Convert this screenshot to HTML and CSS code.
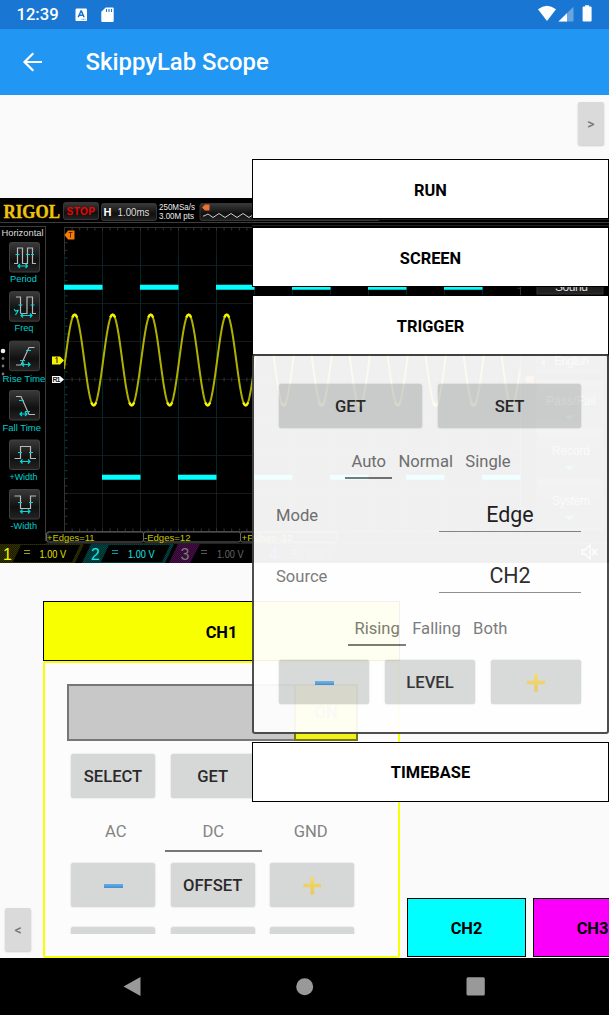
FILE: index.html
```html
<!DOCTYPE html>
<html lang="en">
<head>
<meta charset="utf-8">
<title>SkippyLab Scope</title>
<link rel="stylesheet" href="styles.css">
</head>
<body>
<div class="phone">
  <header class="status">
    <span class="clock">12:39</span>
    <svg class="status-left" width="40" height="16" viewBox="0 0 40 16">
      <rect x="0.500" y="1.500" width="11.500" height="12.600" rx="1.200" fill="#fff"/>
      <path d="M3.200 10.200 6 4h.4l2.700 6.200M4.300 8.200h3.600" fill="none" stroke="#1976d2" stroke-width="1.500"/>
      <path d="M6.500 12.300h4" stroke="#1976d2" stroke-width=".8" stroke-dasharray="1 .6"/>
      <path d="M30.700.4H37.600Q38.700.4 38.700 1.500V14Q38.700 15.100 37.600 15.100H27.400Q26.300 15.100 26.300 14V4.800Z" fill="#fff"/>
      <path d="M31.500 2v3M34 2v3M36.500 2v3" stroke="#1976d2" stroke-width="1.100"/>
    </svg>
    <svg class="status-right" width="56" height="18" viewBox="0 0 56 18">
      <path d="M0 4.300Q9-3 18 4.300L9 16Z" fill="#fff"/>
      <path d="M20.500 16.500 35.500 1.800V16.500Z" fill="#fff" opacity=".35"/>
      <path d="M20.500 16.500 29 8.200V16.500Z" fill="#fff"/>
      <path d="M45.600 1.500h1.500V.2h4v1.300h1.500q1 0 1 1v13q0 1-1 1h-7q-1 0-1-1v-13q0-1 1-1Z" fill="#fff"/>
    </svg>
  </header>
  <div class="appbar">
    <svg width="20" height="20" viewBox="0 0 20 20"><path d="M20 10H2.500M11.300 1.200 2.500 10l8.800 8.800" fill="none" stroke="#fff" stroke-width="2.200"/></svg>
    <h1 class="title">SkippyLab Scope</h1>
  </div>

  <main class="stage">
    <svg class="scope" id="scope" width="609" height="365" viewBox="0 198 609 365">
      <defs>
        <linearGradient id="key" x1="0" y1="0" x2="0" y2="1"><stop offset="0" stop-color="#3a3a3a"/><stop offset=".6" stop-color="#101010"/><stop offset="1" stop-color="#242424"/></linearGradient>
        <pattern id="hy" width="2" height="2" patternUnits="userSpaceOnUse"><rect width="2" height="2" fill="#1c1c00"/><path d="M0 0 2 2" stroke="#3c3c00" stroke-width=".7"/></pattern>
        <pattern id="hc" width="2" height="2" patternUnits="userSpaceOnUse"><rect width="2" height="2" fill="#002c2c"/><path d="M0 0 2 2" stroke="#005050" stroke-width=".7"/></pattern>
        <pattern id="hp" width="2" height="2" patternUnits="userSpaceOnUse"><rect width="2" height="2" fill="#2c062c"/><path d="M0 0 2 2" stroke="#551455" stroke-width=".7"/></pattern>
        <clipPath id="plot"><rect x="64" y="227" width="458" height="306"/></clipPath>
      </defs>
      <rect x="0" y="198" width="609" height="365" fill="#000"/>
      <text class="brand" x="3.500" y="217.700" textLength="56.500" lengthAdjust="spacingAndGlyphs">RIGOL</text>
      <g fill="url(#key)" stroke="#353535">
        <rect x="63.500" y="202.500" width="35" height="17" rx="2"/>
        <rect x="101.500" y="203.500" width="55" height="17" rx="2"/>
        <rect x="200" y="203.500" width="180" height="17" rx="2"/>
      </g>
      <text class="stop" x="66.500" y="215" textLength="28.500">STOP</text>
      <text class="hlabel" x="103.500" y="216">H</text>
      <text class="small" x="117.500" y="216.400" textLength="32" lengthAdjust="spacingAndGlyphs">1.00ms</text>
      <text class="tiny" x="159" y="210.300" textLength="36" lengthAdjust="spacingAndGlyphs">250MSa/s</text>
      <text class="tiny" x="159" y="218.700" textLength="35" lengthAdjust="spacingAndGlyphs">3.00M pts</text>
      <path d="M202 207.500 205 204.500h4.500v6H205Z" fill="#f07030"/>
      <path d="M203 216h1l4-2 5 3.500 6-4 6 4 6-4 6 4 6-4 6 4 6-4" fill="none" stroke="#ccc"/>
      <path d="M0 222.500H609M46 226.500H0M45.500 226.500V541M48 541V533.500q0-2 2-2" stroke="#3c3c3c" fill="none"/>
      <path d="M252 219.500H609M252 225.500H609" stroke="#222" fill="none"/>
      <text class="menu-title" x="1.500" y="236" textLength="42" lengthAdjust="spacingAndGlyphs">Horizontal</text>
      <g id="keys" fill="url(#key)" stroke="#404040">
        <rect x="9.500" y="242.500" width="30" height="29.500" rx="2"/><rect x="9.500" y="291.700" width="30" height="29.500" rx="2"/>
        <rect x="9.500" y="341.200" width="30" height="29.500" rx="2"/><rect x="9.500" y="390.500" width="30" height="29.500" rx="2"/>
        <rect x="9.500" y="440" width="30" height="29.500" rx="2"/><rect x="9.500" y="489.500" width="30" height="29.500" rx="2"/>
      </g>
      <g fill="none" stroke="#b8b8b8" stroke-width="1.200">
        <path d="M14 263.500H17.500V248H22.500V263.500H27.500V248H32.500V263.500H36"/>
        <path d="M16 297H20.500V313.500M20.500 313.500H27V297H32.500V313.500H36"/>
        <path d="M16 365H21L29 347.500H34.500"/>
        <path d="M16 396.500H21L29 414.500H35"/>
        <path d="M14.500 458.500H20.500V446.500H30.500V458.500H36"/>
        <path d="M14.500 496H20.500V508.500H30.500V496H36"/>
      </g>
      <g fill="none" stroke="#00d8d8" stroke-width="1.200">
        <path d="M15.500 254.500h4M26 254.500h4M31 254.500h3M18 266H27.500M20 264l-2 2 2 2M25.500 264l2 2-2 2"/>
        <path d="M18.500 305h4M30.500 305h4M20.500 315.500H32M23 313.500l-2 2 2 2M30 313.500l2 2-2 2M14 309l1.500 2 3-1M15.500 315l3-5"/>
        <path d="M26 350.500h5M20 360.500h5M21 364.500H30M24 362.500l-2 2 2 2M28 362.500l2 2-2 2"/>
        <path d="M19 400.500h5M25 411.500h5M20 414H27M22 412l-2 2 2 2M25 412l2 2-2 2"/>
        <path d="M18 452.500h4M29 452.500h4M20.500 461.500H30M22.500 459.500l-2 2 2 2M28 459.500l2 2-2 2"/>
        <path d="M18 502.500h4M29 502.500h4M20.500 511.500H30M22.500 509.500l-2 2 2 2M28 509.500l2 2-2 2"/>
      </g>
      <g class="keytext">
        <text x="10" y="281.500" textLength="27" lengthAdjust="spacingAndGlyphs">Period</text><text x="14.500" y="331" textLength="19" lengthAdjust="spacingAndGlyphs">Freq</text>
        <text x="2.500" y="381.500" textLength="43" lengthAdjust="spacingAndGlyphs">Rise Time</text><text x="2.500" y="431" textLength="38.500" lengthAdjust="spacingAndGlyphs">Fall Time</text>
        <text x="9.500" y="479.500" textLength="28" lengthAdjust="spacingAndGlyphs">+Width</text><text x="10.500" y="528.500" textLength="26.500" lengthAdjust="spacingAndGlyphs">-Width</text>
      </g>
      <g fill="#777"><circle cx="3" cy="351" r="2.300" fill="#eee"/><circle cx="3" cy="358.500" r="1.400"/><circle cx="3" cy="366" r="1.400"/><circle cx="3" cy="374" r="1.400"/></g>
      <g id="grid" fill="none" stroke="#333"></g>
      <g id="waves" fill="none" clip-path="url(#plot)"></g>
      <path d="M64.500 235 68 230.500h6.500v9H68Z" fill="#f57c00"/><path d="M68.500 232.500h4M70.500 232.500v5" stroke="#622" />
      <path d="M52 356.500h8l4 4-4 4h-8Z" fill="#f4f400"/><path d="M55.500 358.500 57 357.500v5.500" stroke="#222" fill="none"/>
      <path d="M52 376h8l4 3.500-4 3.500h-8Z" fill="#fff"/><text class="ref" x="52.500" y="382.300" textLength="8">R1</text>
      <path d="M524 379.500l3-3.500h7v7h-7Z" fill="#c86a20"/>
      <g fill="none" stroke="#666">
        <rect x="46.500" y="532" width="97" height="10" rx="2"/><rect x="143.500" y="532" width="97" height="10" rx="2"/><rect x="240.500" y="532" width="97" height="10" rx="2"/>
      </g>
      <path d="M46 543.500H609" stroke="#222"/>
      <g class="measure"><text x="47" y="541" textLength="47.500" lengthAdjust="spacingAndGlyphs">+Edges=11</text><text x="144" y="541" textLength="46.500" lengthAdjust="spacingAndGlyphs">-Edges=12</text><text x="241.500" y="541" textLength="51" lengthAdjust="spacingAndGlyphs">+Pulses=12</text></g>
      <path d="M0 544H84L75 563H0Z" fill="url(#hy)"/><path d="M21 545H80L72 562H13Z" fill="#000"/>
      <path d="M91 544H174L165 563H82Z" fill="url(#hc)"/><path d="M109 545H170L162 562H101Z" fill="#000"/>
      <path d="M178 544H200L190 563H169Z" fill="url(#hp)"/>
      <g class="chan">
        <text x="3" y="559.500" fill="#f4f400">1</text><text x="91" y="559.500" fill="#19e6e6">2</text>
        <text x="180.500" y="559.500" fill="#777">3</text><text x="269" y="559.500" fill="#4060e0">4</text>
      </g>
      <path d="M24 550.500h6M24 553.500h6" stroke="#a0a000"/><path d="M112 550.500h6M112 553.500h6" stroke="#00a0a0"/><path d="M201 550.500h6M201 553.500h6M291 550.500h6M291 553.500h6" stroke="#555"/>
      <g class="volts"><text x="39.500" y="557.500" textLength="26.500" lengthAdjust="spacingAndGlyphs" fill="#e0e000">1.00 V</text><text x="128" y="557.500" textLength="26.500" lengthAdjust="spacingAndGlyphs" fill="#19e6e6">1.00 V</text><text x="217" y="557.500" textLength="26.500" lengthAdjust="spacingAndGlyphs" fill="#666">1.00 V</text><text x="306" y="557.500" textLength="26.500" lengthAdjust="spacingAndGlyphs" fill="#555">10.0 V</text></g>
      <g fill="url(#key)" stroke="#333"><rect x="537" y="245" width="66" height="49"/><rect x="537" y="330" width="66" height="43"/><rect x="537" y="380.500" width="66" height="49"/><rect x="537" y="430.500" width="66" height="49"/><rect x="537" y="480.500" width="66" height="49"/></g>
      <g class="side"><text x="555" y="291" textLength="33">Sound</text><g opacity=".8"><text x="554" y="364.500" textLength="35">English</text><text x="546" y="405" textLength="50">Pass/Fail</text><text x="552" y="455" textLength="38">Record</text><text x="552" y="505" textLength="38">System</text></g></g>
      <path d="M541 362.500l4-4v8ZM565 415.500h9l-4.500 4.500ZM565 466h9l-4.500 4.500ZM565 516h9l-4.500 4.500Z" fill="#00a8c8"/>
      <path d="M582 550h3l5-5v14l-5-5h-3ZM592 549l5 6M597 549l-5 6" fill="none" stroke="#fff" stroke-width="1.300"/>
    </svg>

    <section class="channels">
      <button class="side-tab tab-left">&lt;</button>
      <div class="channel ch1">
        <button class="head yellow">CH1</button>
        <div class="channel-body">
          <div class="toggle"><span class="toggle-on">ON</span></div>
          <div class="viewport">
            <div class="grid3">
              <button class="btn">SELECT</button><button class="btn">GET</button><button class="btn"></button>
            </div>
            <div class="tabs3"><span>AC</span><span class="picked">DC</span><span>GND</span></div>
            <div class="grid3">
              <button class="btn"><i class="minus"></i></button><button class="btn">OFFSET</button><button class="btn"><i class="plus"></i></button>
            </div>
            <div class="grid3 cut"><button class="btn"></button><button class="btn"></button><button class="btn"></button></div>
          </div>
        </div>
      </div>
      <button class="head small-head cyan">CH2</button>
      <button class="head small-head magenta">CH3</button>
    </section>

    <button class="side-tab tab-right">&gt;</button>

    <aside class="controls">
      <button class="head white">RUN</button>
      <button class="head white">SCREEN</button>
      <div class="group">
        <button class="head white">TRIGGER</button>
        <div class="trigger">
          <div class="pair"><button class="btn">GET</button><button class="btn">SET</button></div>
          <div class="choices mode-choices"><span class="picked">Auto</span><span>Normal</span><span>Single</span></div>
          <div class="field"><label>Mode</label><span class="value">Edge</span></div>
          <div class="field second"><label>Source</label><span class="value">CH2</span></div>
          <div class="choices slope-choices"><span class="picked">Rising</span><span>Falling</span><span>Both</span></div>
          <div class="triple"><button class="btn"><i class="minus"></i></button><button class="btn">LEVEL</button><button class="btn"><i class="plus"></i></button></div>
        </div>
      </div>
      <button class="head white">TIMEBASE</button>
    </aside>
  </main>

  <nav class="navbar">
    <svg width="609" height="57" viewBox="0 958 609 57" fill="#999"><path d="M123.500 986.500 140.500 977V996Z"/><circle cx="304.700" cy="986.700" r="8.500"/><rect x="466.500" y="977.300" width="18.300" height="18.300" rx="1.500"/></svg>
  </nav>
</div>
<script src="scope.js"></script>
</body>
</html>
```
FILE: styles.css
```css
* { box-sizing: border-box; }
body { margin: 0; background: #fafafa; font-family: Roboto, "Noto Sans", sans-serif; font-size: 16.6px; }
button { appearance: none; border: 0; margin: 0; padding: 0; font: inherit; color: inherit; background: none; }
.phone { width: 609px; height: 1015px; display: flex; flex-direction: column; overflow: hidden; }

.status { height: 28.5px; flex: none; background: #1976d2; color: #fff; display: flex; align-items: flex-start; padding: 0 15px 0 16.5px; }
.clock { font-weight: 500; font-size: 16.6px; line-height: 30px; width: 58.5px; }
.status-left { margin: 7px auto 0 0; }
.status-right { margin-top: 5px; }
.appbar { height: 66.5px; flex: none; background: #2196f3; color: #fff; display: flex; align-items: center; padding-left: 22px; gap: 43.5px; }
.title { margin: 1px 0 0; font-size: 23.9px; font-weight: 500; }

.stage { position: relative; height: 863px; flex: none; overflow: hidden; background: #fafafa; display: flex; flex-direction: column; }
.scope { display: block; flex: none; margin-top: 103px; }
.scope text { font-family: "Liberation Sans", Arial, sans-serif; }
.scope .brand { font-family: "Liberation Serif", serif; font-weight: 700; font-size: 18.5px; fill: #efc40c; stroke: #efc40c; stroke-width: .4px; }
.scope .stop { font-weight: 700; font-size: 10px; fill: #f00000; }
.scope .hlabel { font-weight: 700; font-size: 11px; fill: #fff; }
.scope .small { font-size: 10.3px; fill: #ddd; }
.scope .tiny { font-size: 9px; fill: #eee; }
.scope .menu-title { font-size: 9.8px; fill: #ddd; }
.keytext { font-size: 9.9px; fill: #00cfcf; }
.scope .ref { font-size: 7px; font-weight: 700; fill: #222; }
.measure { font-size: 9.8px; fill: #c8c800; }
.chan { font-size: 16px; }
.volts { font-size: 10px; }
.side { font-size: 12px; fill: #ddd; }

.channels { flex: none; height: 357px; margin-top: 38px; display: flex; align-items: flex-end; overflow: hidden; padding-bottom: 1px; }
.side-tab { width: 26px; height: 43px; flex: none; border-radius: 2px; background: #dadada; color: #777; font-size: 14px; font-weight: 500; box-shadow: 0 1px 2px #0003; }
.tab-left { margin: 0 12px 6px 5px; }
.tab-right { position: absolute; right: 5px; top: 7px; }
.head { display: block; border: 1.500px solid #000; font-weight: 700; font-size: 16.4px; color: #000; height: 60px; text-align: center; padding-top: 2px; }
.channel { width: 357px; height: 357px; margin-bottom: -1px; flex: none; display: flex; flex-direction: column; }
.yellow { width: 100%; flex: none; background: #f8ff00; }
.cyan { background: #00ffff; }
.magenta { background: #fa00fa; }
.small-head { flex: none; width: 119px; height: 59px; margin-left: 7px; }
.channel-body { flex: 1; background: #fcfcfc; border: 2px solid #f8ff00; border-radius: 2px; padding: 21px 40px 22px 22px; display: flex; flex-direction: column; }
.toggle { height: 57px; flex: none; border: 2px solid #777; background: #c8c8c8; display: flex; justify-content: flex-end; }
.toggle-on { width: 64px; margin: -2px; border: 2px solid #77770f; background: #f2f21b; color: #8c8cc0; display: flex; align-items: center; justify-content: center; }
.viewport { height: 193px; flex: none; overflow: hidden; padding: 13px 4px 0; }
.grid3 { display: grid; grid-template-columns: repeat(3, 84px); gap: 15.700px; }
.btn { height: 44px; border-radius: 2.500px; background: #d6d7d7; color: #2a2a2a; font-weight: 500; display: flex; align-items: center; justify-content: center; padding: 1px 0 0; box-shadow: 0 0 2px #0003; }
.tabs3 { display: grid; grid-template-columns: repeat(3, 97.500px); margin: 16px -4px 16px; height: 33px; color: #838383; text-align: center; line-height: 36px; }
.picked { border-bottom: 2px solid #777; }
.cut { margin-top: 20px; }
.minus { width: 19px; height: 4px; background: linear-gradient(#68aee5, #3f8fd6); }
.plus { width: 18px; height: 18px; background: linear-gradient(#f2dc66, #e9c65c); clip-path: polygon(40% 0, 60% 0, 60% 40%, 100% 40%, 100% 60%, 60% 60%, 60% 100%, 40% 100%, 40% 60%, 0 60%, 0 40%, 40% 40%); }

.controls { position: absolute; right: 0; top: 64px; width: 357px; display: flex; flex-direction: column; gap: 8px; }
.white { width: 100%; background: #fff; flex: none; }
.trigger { height: 379.500px; margin-top: -1px; border: 2.500px solid #444; border-radius: 3px; background: #fff; opacity: .94; padding: 28px 26px 0 25px; }
.pair { display: grid; grid-template-columns: 1fr 1fr; gap: 16px; }
.triple { display: grid; grid-template-columns: repeat(3, 1fr); gap: 16px; }
.choices { display: flex; justify-content: center; color: #757575; line-height: 35px; height: 35px; padding-left: 2px; }
.choices span { padding: 0 6.2px; }
.mode-choices { margin: 16px 0 18px; }
.slope-choices { margin: 18px 0 14px; }
.field { display: flex; justify-content: space-between; height: 35px; color: #757575; }
.field label { line-height: 38px; margin-left: -3px; }
.field.second { margin-top: 26px; }
.value { width: 142px; border-bottom: 1.500px solid #8a8a8a; text-align: center; color: #222; font-size: 21.400px; line-height: 36px; }

.navbar { height: 57px; flex: none; background: #000; }
.navbar svg { display: block; }
```
FILE: scope.js
```js
// Draws the graticule and both traces: 38px per division.
(function () {
  var NS = 'http://www.w3.org/2000/svg';
  function path(parent, d, attrs) {
    var p = document.createElementNS(NS, 'path');
    p.setAttribute('d', d);
    Object.keys(attrs || {}).forEach(function (k) { p.setAttribute(k, attrs[k]); });
    document.getElementById(parent).appendChild(p);
  }
  var DIV = 38, L = 64.5, T = 227.5, W = 12 * DIV, H = 8 * DIV, d = '', i;
  path('grid', 'M' + L + ' ' + T + 'h' + W + 'v' + H + 'h-' + W + 'Z');
  for (i = 1; i < 12; i++) d += 'M' + (L + i * DIV) + ' ' + T + 'v' + H;
  for (i = 1; i < 8; i++) d += 'M' + L + ' ' + (T + i * DIV) + 'h' + W;
  path('grid', d, { 'stroke-dasharray': '1 1', stroke: '#303030' });
  d = '';
  for (i = 0; i <= 60; i++) {
    var x = L + i * 7.6;
    d += 'M' + x + ' ' + T + 'v3M' + x + ' ' + (T + H) + 'v-3M' + x + ' ' + (T + H / 2 - 2) + 'v4';
  }
  for (i = 0; i <= 40; i++) {
    var y = T + i * 7.6;
    d += 'M' + L + ' ' + y + 'h3M' + (L + W) + ' ' + y + 'h-3';
  }
  path('grid', d);

  var edges = '', flats = '';
  for (i = 0; i < 12; i++) {
    var sx = 64 + i * DIV, up = i % 2 === 0;
    edges += 'M' + (sx + .5) + ' 254V478';
    flats += up ? 'M' + sx + ' 287.2h38.500' : 'M' + sx + ' 477.3h38.500';
  }
  path('waves', edges, { stroke: '#002828' });
  path('waves', flats, { stroke: '#00ffff', 'stroke-width': 5 });
  var s = '';
  for (var px = 64; px <= 520; px += .5) {
    s += (s ? 'L' : 'M') + px + ' ' + (360 - 45.5 * Math.cos((px - 74.7) / DIV * 2 * Math.PI)).toFixed(2);
  }
  path('waves', s, { stroke: '#b0b000', 'stroke-width': 2 });
  var tips = '';
  for (i = 0; i < 12; i++) {
    var c = 74.7 + i * DIV;
    tips += 'M' + (c - 2.5) + ' 317.500q2.500-5.500 5 0M' + (c + 16.5) + ' 402.500q2.500 5.500 5 0';
  }
  path('waves', tips, { stroke: '#f5f500', 'stroke-width': 2.4 });
})();
```
